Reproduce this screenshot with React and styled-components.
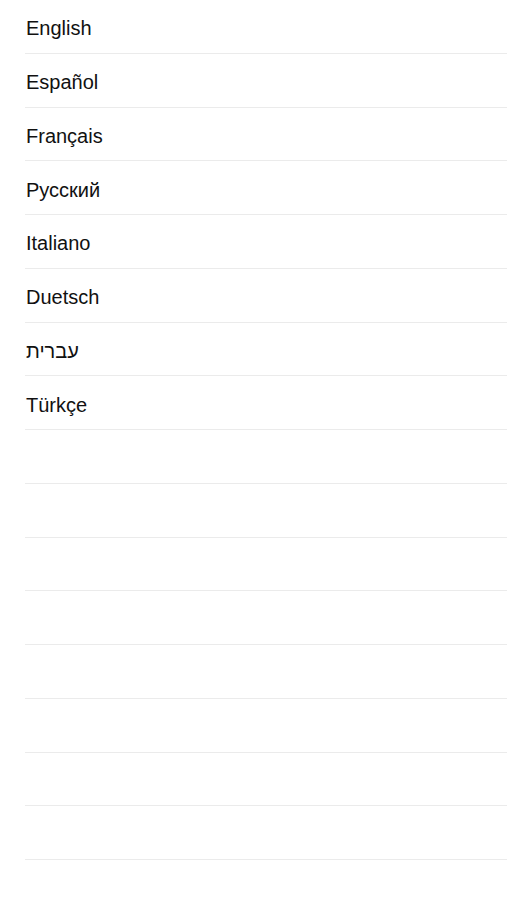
import React from "react";
import styled, { createGlobalStyle } from "styled-components";

const GlobalStyle = createGlobalStyle`
  html, body {
    margin: 0;
    padding: 0;
    background: #ffffff;
  }
  body {
    font-family: "Liberation Sans", Arial, sans-serif;
    -webkit-font-smoothing: antialiased;
  }
`;

const languages = [
  "English",
  "Español",
  "Français",
  "Русский",
  "Italiano",
  "Duetsch",
  "עברית",
  "Türkçe",
];

const EMPTY_ROWS = 8;

const List = styled.ul`
  list-style: none;
  margin: 0;
  padding: 0;
  width: 507px;
  background: #ffffff;
`;

const Row = styled.li`
  display: flex;
  align-items: center;
  height: 53.75px;
  box-sizing: border-box;
  padding-left: 25px;
`;

const Content = styled.div`
  flex: 1;
  height: 100%;
  display: flex;
  align-items: center;
  box-sizing: border-box;
  padding-top: 5px;
  border-bottom: 1px solid #ebebeb;
`;

const Label = styled.span`
  font-size: 20px;
  color: #111111;
  padding-left: 1px;
  unicode-bidi: plaintext;
  text-align: left;
`;

const LanguageList = () => (
  <List>
    {languages.map((name) => (
      <Row key={name}>
        <Content>
          <Label dir="auto">{name}</Label>
        </Content>
      </Row>
    ))}
    {Array.from({ length: EMPTY_ROWS }).map((_, i) => (
      <Row key={`empty-${i}`}>
        <Content />
      </Row>
    ))}
  </List>
);

export default function App() {
  return (
    <>
      <GlobalStyle />
      <LanguageList />
    </>
  );
}
